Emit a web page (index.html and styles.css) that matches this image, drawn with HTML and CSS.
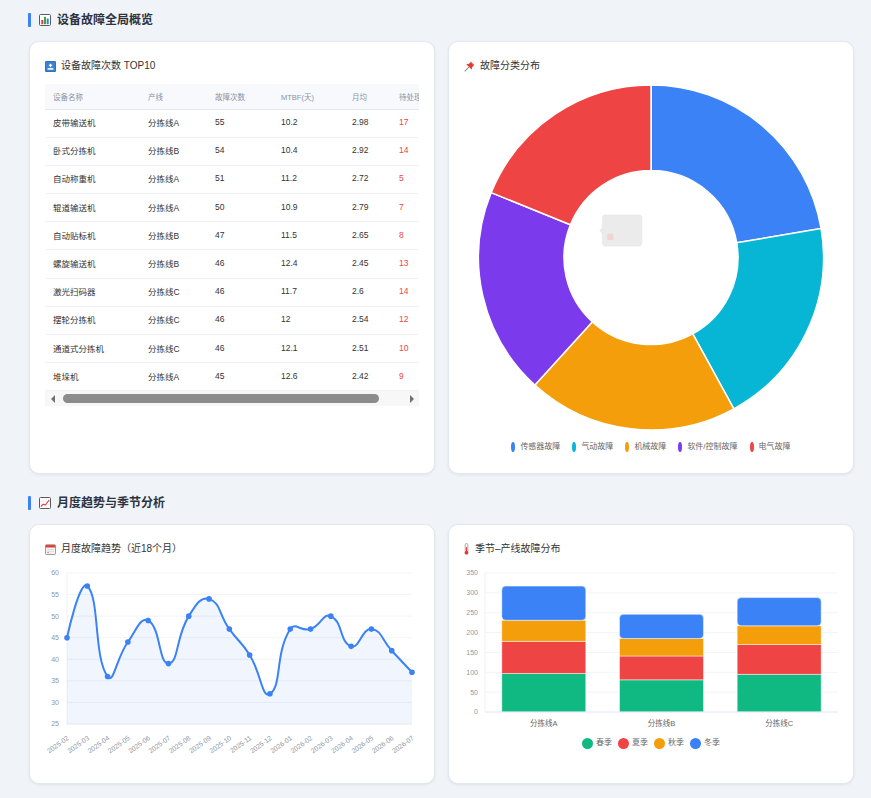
FILE: index.html
```html
<!DOCTYPE html>
<html lang="zh-CN">
<head>
<meta charset="utf-8">
<title>设备故障分析</title>
<link rel="stylesheet" href="styles.css">
</head>
<body>
<main class="page">
  <section class="section">
    <h2 class="section-title">
      <span class="section-bar"></span>
      <svg class="section-icon" viewBox="0 0 12 12"><rect x="0.5" y="0.5" width="11" height="11" rx="1" fill="#fff" stroke="#5a5a5a"/><rect x="2.3" y="6" width="2" height="4.2" fill="#e53935"/><rect x="5" y="2.8" width="2" height="7.4" fill="#43a047"/><rect x="7.7" y="4.6" width="2" height="5.6" fill="#1e88e5"/></svg>
      <span>设备故障全局概览</span>
    </h2>
    <div class="grid grid-top">
      <div class="card">
        <div class="card-title">
          <svg class="title-icon" viewBox="0 0 12 12"><rect width="12" height="12" rx="1.5" fill="#2c6cb8"/><rect x="0.8" y="0.8" width="10.4" height="10.4" rx="1" fill="#3b82d0"/><path d="M6 2.6 L8.3 5.1 H6.8 V6.8 H5.2 V5.1 H3.7 Z" fill="#fff"/><rect x="2.8" y="7.8" width="6.4" height="1.7" fill="#fff"/></svg>
          <span>设备故障次数 TOP10</span>
        </div>
        <div class="table-wrap">
          <table class="table">
            <colgroup><col class="c1"><col class="c2"><col class="c3"><col class="c4"><col class="c5"><col class="c6"></colgroup>
            <thead>
              <tr><th>设备名称</th><th>产线</th><th>故障次数</th><th>MTBF(天)</th><th>月均</th><th>待处理</th></tr>
            </thead>
            <tbody>
              <tr><td>皮带输送机</td><td>分拣线A</td><td>55</td><td>10.2</td><td>2.98</td><td class="pending">17</td></tr>
              <tr><td>卧式分拣机</td><td>分拣线B</td><td>54</td><td>10.4</td><td>2.92</td><td class="pending">14</td></tr>
              <tr><td>自动称重机</td><td>分拣线A</td><td>51</td><td>11.2</td><td>2.72</td><td class="pending">5</td></tr>
              <tr><td>辊道输送机</td><td>分拣线A</td><td>50</td><td>10.9</td><td>2.79</td><td class="pending">7</td></tr>
              <tr><td>自动贴标机</td><td>分拣线B</td><td>47</td><td>11.5</td><td>2.65</td><td class="pending">8</td></tr>
              <tr><td>螺旋输送机</td><td>分拣线B</td><td>46</td><td>12.4</td><td>2.45</td><td class="pending">13</td></tr>
              <tr><td>激光扫码器</td><td>分拣线C</td><td>46</td><td>11.7</td><td>2.6</td><td class="pending">14</td></tr>
              <tr><td>摆轮分拣机</td><td>分拣线C</td><td>46</td><td>12</td><td>2.54</td><td class="pending">12</td></tr>
              <tr><td>通道式分拣机</td><td>分拣线C</td><td>46</td><td>12.1</td><td>2.51</td><td class="pending">10</td></tr>
              <tr><td>堆垛机</td><td>分拣线A</td><td>45</td><td>12.6</td><td>2.42</td><td class="pending">9</td></tr>
            </tbody>
          </table>
        </div>
        <div class="scrollbar">
          <span class="scroll-btn scroll-left"></span>
          <span class="scroll-track"><span class="scroll-thumb"></span></span>
          <span class="scroll-btn scroll-right"></span>
        </div>
      </div>

      <div class="card">
        <div class="card-title card-title-chart">
          <svg class="title-icon" viewBox="0 0 12 12"><line x1="1" y1="11" x2="5.2" y2="6.8" stroke="#8a8a8a" stroke-width="1.1" stroke-linecap="round"/><path d="M7.4 0.6 L11.4 4.6 L10.2 5.3 L8.4 7.4 L9 8.6 L8.3 9.3 L2.7 3.7 L3.4 3 L4.6 3.6 L6.7 1.8 Z" fill="#e53935"/><path d="M7.6 1.6 L10.4 4.4" stroke="#ff8a80" stroke-width="0.6"/></svg>
          <span>故障分类分布</span>
        </div>
        <svg class="chart-donut" viewBox="0 0 374 364">
          <g class="donut">
            <path fill="#3b82f6" d="M187,8 A172.5,172.5 0 0 1 357.03,151.44 L272.76,165.84 A87,87 0 0 0 187,93.5 Z"/>
            <path fill="#06b6d4" d="M357.03,151.44 A172.5,172.5 0 0 1 269.84,331.81 L228.78,256.81 A87,87 0 0 0 272.76,165.84 Z"/>
            <path fill="#f59e0b" d="M269.84,331.81 A172.5,172.5 0 0 1 70.91,308.09 L128.45,244.85 A87,87 0 0 0 228.78,256.81 Z"/>
            <path fill="#7c3aed" d="M70.91,308.09 A172.5,172.5 0 0 1 27.17,115.6 L106.39,147.77 A87,87 0 0 0 128.45,244.85 Z"/>
            <path fill="#ef4444" d="M27.17,115.6 A172.5,172.5 0 0 1 187,8 L187,93.5 A87,87 0 0 0 106.39,147.77 Z"/>
          </g>
          <g class="ghost-tip">
            <path d="M135.2,153.7 L138.6,150.6 L138.6,156.8 Z" fill="#ebebeb"/>
            <rect x="138.4" y="138" width="39.4" height="31" rx="3" fill="#ebebeb" stroke="#e4e4e4" stroke-width="0.6"/>
            <rect x="143.3" y="156.7" width="6" height="6.3" rx="1" fill="#f0d4d4"/>
          </g>
        </svg>
        <div class="legend legend-donut">
          <span class="legend-item"><i class="dot-oval" style="background:#3b82f6"></i>传感器故障</span>
          <span class="legend-item"><i class="dot-oval" style="background:#06b6d4"></i>气动故障</span>
          <span class="legend-item"><i class="dot-oval" style="background:#f59e0b"></i>机械故障</span>
          <span class="legend-item"><i class="dot-oval" style="background:#7c3aed"></i>软件/控制故障</span>
          <span class="legend-item"><i class="dot-oval" style="background:#ef4444"></i>电气故障</span>
        </div>
      </div>
    </div>
  </section>

  <section class="section">
    <h2 class="section-title">
      <span class="section-bar"></span>
      <svg class="section-icon" viewBox="0 0 12 12"><rect x="0.5" y="0.5" width="11" height="11" rx="1" fill="#fff" stroke="#5a5a5a"/><path d="M1 4 H11 M1 7.5 H11 M4 1 V11 M7.5 1 V11" stroke="#e3e3e3" stroke-width="0.5"/><polyline points="1.8,9.6 4.2,7.2 6.4,8 10.2,3" fill="none" stroke="#e53935" stroke-width="1.1" stroke-linejoin="round"/></svg>
      <span>月度趋势与季节分析</span>
    </h2>
    <div class="grid grid-bottom">
      <div class="card">
        <div class="card-title card-title-chart">
          <svg class="title-icon" viewBox="0 0 12 12"><rect x="0.5" y="0.8" width="11" height="10.7" rx="1" fill="#f4f4f4" stroke="#777" stroke-width="0.8"/><rect x="0.9" y="1.2" width="10.2" height="2.6" fill="#e53935"/><path d="M2.5 6 H9.5 M2.5 8 H9.5" stroke="#c9c9c9" stroke-width="0.6"/><rect x="2.5" y="8.8" width="1.6" height="1.2" fill="#e57373"/></svg>
          <span>月度故障趋势（近18个月）</span>
        </div>
        <svg id="trend" class="chart-line" viewBox="0 0 374 204"></svg>
      </div>

      <div class="card">
        <div class="card-title card-title-chart">
          <svg class="title-icon thermo" viewBox="0 0 5 12"><rect x="1.2" y="0.5" width="2.6" height="8.5" rx="1.3" fill="#fafafa" stroke="#8a8a8a" stroke-width="0.7"/><rect x="2" y="4.2" width="1" height="5" fill="#e53935"/><circle cx="2.5" cy="9.7" r="1.9" fill="#e53935"/></svg>
          <span>季节–产线故障分布</span>
        </div>
        <svg class="chart-bar" viewBox="0 0 374 172">
          <g class="grid-lines">
            <line x1="21" x2="374" y1="132.14" y2="132.14"/>
            <line x1="21" x2="374" y1="112.29" y2="112.29"/>
            <line x1="21" x2="374" y1="92.43" y2="92.43"/>
            <line x1="21" x2="374" y1="72.57" y2="72.57"/>
            <line x1="21" x2="374" y1="52.71" y2="52.71"/>
            <line x1="21" x2="374" y1="32.86" y2="32.86"/>
            <line x1="21" x2="374" y1="13" y2="13"/>
          </g>
          <line class="axis-y" x1="21" x2="21" y1="13" y2="152"/>
          <g class="axis-label" text-anchor="end">
            <text x="14" y="152" dy="0.35em">0</text>
            <text x="14" y="132.14" dy="0.35em">50</text>
            <text x="14" y="112.29" dy="0.35em">100</text>
            <text x="14" y="92.43" dy="0.35em">150</text>
            <text x="14" y="72.57" dy="0.35em">200</text>
            <text x="14" y="52.71" dy="0.35em">250</text>
            <text x="14" y="32.86" dy="0.35em">300</text>
            <text x="14" y="13" dy="0.35em">350</text>
          </g>
          <g class="bars">
            <rect fill="#10b981" x="37.8" y="113.48" width="84" height="38.52"/>
            <rect fill="#ef4444" x="37.8" y="81.31" width="84" height="32.17"/>
            <rect fill="#f59e0b" x="37.8" y="60.26" width="84" height="21.05"/>
            <rect fill="#3b82f6" x="37.8" y="26.11" width="84" height="34.15" rx="4"/>

            <rect fill="#10b981" x="155.5" y="119.83" width="84" height="32.17"/>
            <rect fill="#ef4444" x="155.5" y="96" width="84" height="23.83"/>
            <rect fill="#f59e0b" x="155.5" y="78.53" width="84" height="17.47"/>
            <rect fill="#3b82f6" x="155.5" y="54.3" width="84" height="24.23" rx="4"/>

            <rect fill="#10b981" x="273.17" y="114.27" width="84" height="37.73"/>
            <rect fill="#ef4444" x="273.17" y="84.49" width="84" height="29.78"/>
            <rect fill="#f59e0b" x="273.17" y="65.82" width="84" height="18.67"/>
            <rect fill="#3b82f6" x="273.17" y="37.62" width="84" height="28.2" rx="4"/>
          </g>
          <line class="axis-x" x1="21" x2="374" y1="152" y2="152"/>
          <g class="cat-label" text-anchor="middle">
            <text x="79.83" y="163" dy="0.35em">分拣线A</text>
            <text x="197.5" y="163" dy="0.35em">分拣线B</text>
            <text x="315.17" y="163" dy="0.35em">分拣线C</text>
          </g>
        </svg>
        <div class="legend legend-bar">
          <span class="legend-item"><i class="dot-round" style="background:#10b981"></i>春季</span>
          <span class="legend-item"><i class="dot-round" style="background:#ef4444"></i>夏季</span>
          <span class="legend-item"><i class="dot-round" style="background:#f59e0b"></i>秋季</span>
          <span class="legend-item"><i class="dot-round" style="background:#3b82f6"></i>冬季</span>
        </div>
      </div>
    </div>
  </section>
</main>
<script src="script.js"></script>
</body>
</html>
```

FILE: styles.css
```css
* { box-sizing: border-box; }
html, body { margin: 0; padding: 0; }
body {
  background: #f0f3f8;
  font-family: "Liberation Sans", "Noto Sans CJK SC", sans-serif;
  color: #333;
}
.page { padding: 12px 17px 20px 29px; }
.section + .section { margin-top: 21px; }

.section-title {
  display: flex;
  align-items: center;
  height: 16px;
  margin: 0 0 13px -1px;
  font-size: 12px;
  line-height: 16px;
  font-weight: 600;
  color: #2d3441;
}
.section-bar {
  width: 3px;
  height: 14px;
  background: #3b82f6;
  border-radius: 1px;
  margin-right: 8px;
}
.section-icon { width: 12px; height: 12px; margin-right: 6px; flex: none; }

.grid {
  display: grid;
  grid-template-columns: 1fr 1fr;
  gap: 13px;
}
.card {
  background: #fff;
  border: 1px solid #e3e8ef;
  border-radius: 10px;
  box-shadow: 0 1px 3px rgba(15, 23, 42, 0.07);
  padding: 18px 15px;
  overflow: hidden;
}
.grid-top .card { height: 433px; }
.grid-bottom .card { height: 260px; }

.card-title {
  display: flex;
  align-items: center;
  gap: 5px;
  height: 12px;
  font-size: 10px;
  line-height: 12px;
  color: #333;
  margin-bottom: 12px;
}
.card-title-chart { margin-bottom: 5px; }
.title-icon { width: 11px; height: 11px; flex: none; }
.title-icon.thermo { width: 5px; height: 12px; margin-right: 1px; }

/* table */
.table-wrap { width: 374px; overflow: hidden; }
.table {
  border-collapse: collapse;
  table-layout: fixed;
  width: 405px;
}
.c1 { width: 95px; }
.c2 { width: 67px; }
.c3 { width: 66px; }
.c4 { width: 71px; }
.c5 { width: 47px; }
.c6 { width: 59px; }
.table th {
  height: 25px;
  background: #f7f9fc;
  color: #8a93a3;
  font-size: 7.5px;
  font-weight: 400;
  text-align: left;
  padding: 0 0 0 8px;
  border-bottom: 1px solid #e5e9f0;
  white-space: nowrap;
}
.table td {
  height: 28.2px;
  font-size: 8.5px;
  color: #333;
  padding: 0 0 2px 8px;
  border-bottom: 1px solid #eef1f5;
  white-space: nowrap;
}
.table td.pending { color: #ef4444; }

.scrollbar {
  display: flex;
  align-items: center;
  width: 374px;
  height: 15px;
  background: #f7f7f7;
}
.scroll-btn {
  width: 15px;
  height: 15px;
  display: flex;
  align-items: center;
  justify-content: center;
  flex: none;
}
.scroll-btn::before { content: ""; border-style: solid; width: 0; height: 0; }
.scroll-left::before { border-width: 4px 4px 4px 0; border-color: transparent #707070 transparent transparent; }
.scroll-right::before { border-width: 4px 0 4px 4px; border-color: transparent transparent transparent #707070; }
.scroll-track { flex: 1; height: 15px; display: flex; align-items: center; }
.scroll-thumb {
  margin-left: 3px;
  width: 316px;
  height: 9px;
  border-radius: 4.5px;
  background: #8c8c8c;
}

/* charts */
.chart-donut { display: block; width: 374px; height: 364px; }
.donut path { stroke: #fff; stroke-width: 1.5; stroke-linejoin: round; }
.chart-line { display: block; width: 374px; height: 204px; overflow: visible; }
.chart-bar { display: block; width: 374px; height: 172px; overflow: visible; }

.grid-lines line, .grid-line { stroke: #f2f4f7; stroke-width: 1; }
.axis-x { stroke: #e1e6ee; stroke-width: 1; }
.axis-y { stroke: #eef1f6; stroke-width: 1; }
.axis-label { font-size: 7px; fill: #9098a4; }
.cat-label { font-size: 7.5px; fill: #666; }
.bars rect { stroke: rgba(255, 255, 255, 0.6); stroke-width: 0.8; }

.trend-area { fill: rgba(59, 130, 246, 0.08); stroke: none; }
.trend-line { fill: none; stroke: #3b82f6; stroke-width: 2; stroke-linejoin: round; }
.trend-dot { fill: #3b82f6; }
.x-label { font-size: 6.8px; fill: #9098a4; }

.legend {
  display: flex;
  justify-content: center;
  align-items: center;
  height: 12px;
  color: #666;
  font-size: 8px;
  line-height: 12px;
  white-space: nowrap;
}
.legend-item { display: flex; align-items: center; }
.legend-donut { margin-top: 0; gap: 12px; }
.legend-donut .legend-item { gap: 5px; }
.dot-oval { display: block; width: 4px; height: 10px; border-radius: 50%; }
.legend-bar { margin-top: 5px; gap: 6px; }
.legend-bar .legend-item { gap: 3px; }
.dot-round { display: block; width: 11px; height: 11px; border-radius: 50%; }
```

FILE: script.js
```js
(function () {
  var NS = 'http://www.w3.org/2000/svg';
  function el(tag, attrs, parent, text) {
    var e = document.createElementNS(NS, tag);
    for (var k in attrs) e.setAttribute(k, attrs[k]);
    if (text != null) e.textContent = text;
    if (parent) parent.appendChild(e);
    return e;
  }
  var svg = document.getElementById('trend');
  if (!svg) return;
  var data = [45, 57, 36, 44, 49, 39, 50, 54, 47, 41, 32, 47, 47, 50, 43, 47, 42, 37];
  var months = ['2025-02', '2025-03', '2025-04', '2025-05', '2025-06', '2025-07', '2025-08', '2025-09', '2025-10', '2025-11', '2025-12', '2026-01', '2026-02', '2026-03', '2026-04', '2026-05', '2026-06', '2026-07'];
  var x0 = 22, x1 = 367, yTop = 13, yBot = 164, vMin = 25, vMax = 60;
  function Y(v) { return yBot - (v - vMin) * (yBot - yTop) / (vMax - vMin); }
  var step = (x1 - x0) / (data.length - 1);

  var g = el('g', {}, svg);
  for (var v = vMin; v <= vMax; v += 5) {
    var y = Y(v);
    if (v > vMin) el('line', { x1: x0, x2: x1, y1: y, y2: y, 'class': 'grid-line' }, g);
    el('text', { x: 14, y: y, dy: '0.35em', 'text-anchor': 'end', 'class': 'axis-label' }, g, String(v));
  }
  el('line', { x1: x0, x2: x0, y1: yTop, y2: yBot, 'class': 'axis-y' }, g);

  var pts = data.map(function (val, i) { return [x0 + i * step, Y(val)]; });
  var smooth = 0.5;
  var cin = [], cout = [];
  for (var i = 0; i < pts.length; i++) {
    var p = pts[i];
    if (i === 0 || i === pts.length - 1) { cin.push(p); cout.push(p); continue; }
    var pr = pts[i - 1], nx = pts[i + 1];
    var vx = nx[0] - pr[0], vy = nx[1] - pr[1];
    var lp = Math.hypot(p[0] - pr[0], p[1] - pr[1]);
    var ln = Math.hypot(nx[0] - p[0], nx[1] - p[1]);
    var r = ln / (ln + lp);
    cout.push([p[0] + vx * smooth * r, p[1] + vy * smooth * r]);
    cin.push([p[0] - vx * smooth * (1 - r), p[1] - vy * smooth * (1 - r)]);
  }
  function f(n) { return n.toFixed(2); }
  var d = 'M' + f(pts[0][0]) + ',' + f(pts[0][1]);
  for (var j = 1; j < pts.length; j++) {
    d += ' C' + f(cout[j - 1][0]) + ',' + f(cout[j - 1][1]) + ' ' + f(cin[j][0]) + ',' + f(cin[j][1]) + ' ' + f(pts[j][0]) + ',' + f(pts[j][1]);
  }
  el('path', { d: d + ' L' + x1 + ',' + yBot + ' L' + x0 + ',' + yBot + ' Z', 'class': 'trend-area' }, g);
  el('line', { x1: x0, x2: x1, y1: yBot, y2: yBot, 'class': 'axis-x' }, g);
  el('path', { d: d, 'class': 'trend-line' }, g);
  pts.forEach(function (p) { el('circle', { cx: f(p[0]), cy: f(p[1]), r: 2.8, 'class': 'trend-dot' }, g); });
  pts.forEach(function (p, k) {
    el('text', {
      'class': 'x-label', 'text-anchor': 'end', dy: '0.35em',
      transform: 'translate(' + f(p[0] + 1) + ',177) rotate(-36)'
    }, g, months[k]);
  });
})();
```
